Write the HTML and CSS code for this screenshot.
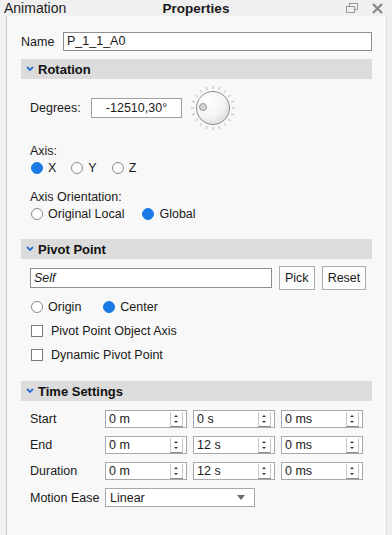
FILE: index.html
```html
<!DOCTYPE html>
<html lang="en">
<head>
    <meta charset="UTF-8">
    <title>Properties</title>
    <link rel="stylesheet" href="styles.css">
</head>
<body>
    <div class="titlebar">
        <span class="tab">Animation</span>
        <span class="title">Properties</span>
        <div class="win-icons">
            <svg width="12" height="10" viewBox="0 0 12 10">
                <rect x="3.5" y="0.5" width="8" height="6" fill="none" stroke="#9a9a9a"/>
                <rect x="0.5" y="3.5" width="8" height="6" fill="#f0f0f0" stroke="#9a9a9a"/>
            </svg>
            <svg width="11" height="11" viewBox="0 0 11 11">
                <path d="M1 1 L10 10 M10 1 L1 10" stroke="#8a8a8a" stroke-width="2.4"/>
            </svg>
        </div>
    </div>

    <div class="panel">
        <div class="row name-row">
            <label class="lbl name-lbl">Name</label>
            <div class="field name-field">P_1_1_A0</div>
        </div>

        <div class="section-head">
            <svg class="chev" width="8" height="6" viewBox="0 0 8 6"><path d="M1 1 L4 4 L7 1" fill="none" stroke="#2b6fd0" stroke-width="1.8"/></svg>
            Rotation
        </div>

        <div class="row degrees-row">
            <label class="lbl">Degrees:</label>
            <div class="field deg-field">-12510,30°</div>
            <svg class="dial" width="46" height="46" viewBox="0 0 46 46">
                <defs>
                    <radialGradient id="knob" cx="0.35" cy="0.3" r="0.8">
                        <stop offset="0" stop-color="#ffffff"/>
                        <stop offset="0.6" stop-color="#f4f4f4"/>
                        <stop offset="1" stop-color="#d8d8d8"/>
                    </radialGradient>
                </defs>
                <g id="ticks" stroke="#b4b4b4" stroke-width="1"></g>
                <circle cx="23" cy="23" r="16.5" fill="url(#knob)" stroke="#8c8c8c"/>
                <circle cx="13" cy="22" r="3.5" fill="#d4d4d4" stroke="#9a9a9a"/>
            </svg>
        </div>

        <div class="caption axis-cap">Axis:</div>
        <div class="radios">
            <span class="opt"><i class="radio on"></i>X</span>
            <span class="opt"><i class="radio"></i>Y</span>
            <span class="opt"><i class="radio"></i>Z</span>
        </div>

        <div class="caption orient-cap">Axis Orientation:</div>
        <div class="radios">
            <span class="opt wide"><i class="radio"></i>Original Local</span>
            <span class="opt"><i class="radio on"></i>Global</span>
        </div>

        <div class="section-head pivot-head">
            <svg class="chev" width="8" height="6" viewBox="0 0 8 6"><path d="M1 1 L4 4 L7 1" fill="none" stroke="#2b6fd0" stroke-width="1.8"/></svg>
            Pivot Point
        </div>

        <div class="row self-row">
            <div class="field self-field">Self</div>
            <button class="btn pick">Pick</button>
            <button class="btn reset">Reset</button>
        </div>

        <div class="radios pivot-radios">
            <span class="opt origin"><i class="radio"></i>Origin</span>
            <span class="opt"><i class="radio on"></i>Center</span>
        </div>
        <div class="check"><i class="box"></i>Pivot Point Object Axis</div>
        <div class="check"><i class="box"></i>Dynamic Pivot Point</div>

        <div class="section-head time-head">
            <svg class="chev" width="8" height="6" viewBox="0 0 8 6"><path d="M1 1 L4 4 L7 1" fill="none" stroke="#2b6fd0" stroke-width="1.8"/></svg>
            Time Settings
        </div>

        <div class="time-grid">
            <label class="lbl">Start</label>
            <div class="spin"><span>0 m</span><i class="arrows"></i></div>
            <div class="spin"><span>0 s</span><i class="arrows"></i></div>
            <div class="spin"><span>0 ms</span><i class="arrows"></i></div>

            <label class="lbl">End</label>
            <div class="spin"><span>0 m</span><i class="arrows"></i></div>
            <div class="spin"><span>12 s</span><i class="arrows"></i></div>
            <div class="spin"><span>0 ms</span><i class="arrows"></i></div>

            <label class="lbl">Duration</label>
            <div class="spin"><span>0 m</span><i class="arrows"></i></div>
            <div class="spin"><span>12 s</span><i class="arrows"></i></div>
            <div class="spin"><span>0 ms</span><i class="arrows"></i></div>

            <label class="lbl">Motion Ease</label>
            <div class="select"><span>Linear</span><svg width="8" height="5" viewBox="0 0 8 5"><path d="M0 0 L8 0 L4 5 Z" fill="#6a6a6a"/></svg></div>
        </div>
    </div>

    <script>
        // dial tick marks
        const ticks = document.getElementById('ticks');
        for (let a = 0; a < 360; a += 18) {
            const r = a * Math.PI / 180;
            const x1 = 23 + Math.cos(r) * 19, y1 = 23 + Math.sin(r) * 19;
            const x2 = 23 + Math.cos(r) * 22, y2 = 23 + Math.sin(r) * 22;
            const l = document.createElementNS('http://www.w3.org/2000/svg', 'line');
            l.setAttribute('x1', x1); l.setAttribute('y1', y1);
            l.setAttribute('x2', x2); l.setAttribute('y2', y2);
            ticks.appendChild(l);
        }
    </script>
</body>
</html>
```

FILE: styles.css
```css
html, body {
    margin: 0;
    padding: 0;
    height: 535px;
    overflow: hidden;
}

body {
    background-color: #f0f0f0;
    font-family: "Liberation Sans", Arial, sans-serif;
    font-size: 12.5px;
    color: #1a1a1a;
}

.titlebar {
    height: 16px;
    display: flex;
    align-items: center;
    position: relative;
    padding-left: 4px;
}

.titlebar .tab {
    font-size: 14px;
    color: #222;
}

.titlebar .title {
    position: absolute;
    left: 0;
    right: 0;
    text-align: center;
    font-weight: bold;
    font-size: 13.5px;
    color: #1a1a1a;
    pointer-events: none;
}

.win-icons {
    margin-left: auto;
    margin-right: 9px;
    display: flex;
    gap: 14px;
    align-items: center;
}

.panel {
    margin-left: 6px;
    width: 381px;
    height: 519px;
    box-sizing: border-box;
    background-color: #f8f8f8;
    border-left: 1px solid #c8c8c8;
    border-right: 1px solid #e0e0e0;
    padding: 16px 14px 0 14px;
}

.row {
    display: flex;
    align-items: center;
}

.lbl {
    color: #1a1a1a;
    white-space: nowrap;
}

.field {
    background: #fff;
    border: 1px solid #8e8e8e;
    height: 17px;
    line-height: 17px;
    padding: 0 3px;
    box-sizing: content-box;
}

.name-lbl {
    width: 42px;
}

.name-field {
    flex: 1;
}

.section-head {
    margin-top: 8px;
    height: 20px;
    background-color: #dcdcdc;
    display: flex;
    align-items: center;
    font-weight: bold;
    font-size: 13px;
    color: #111;
    padding-left: 5px;
}

.chev {
    margin-right: 4px;
}

.degrees-row {
    margin-top: 7px;
    padding-left: 9px;
    height: 44px;
}

.degrees-row .lbl {
    width: 61px;
}

.deg-field {
    width: 83px;
    text-align: center;
    border-color: #a0a0a0;
    height: 18px;
    line-height: 18px;
}

.dial {
    margin-left: 8px;
}

.caption {
    padding-left: 9px;
    height: 14px;
    line-height: 14px;
}

.axis-cap {
    margin-top: 14px;
}

.orient-cap {
    margin-top: 15px;
}

.radios {
    display: flex;
    padding-left: 10px;
    margin-top: 3px;
    height: 14px;
    align-items: center;
}

.opt {
    display: flex;
    align-items: center;
    margin-right: 15px;
}

.opt.wide {
    margin-right: 18px;
}

.radio {
    display: inline-block;
    width: 10px;
    height: 10px;
    border-radius: 50%;
    border: 1px solid #8a8a8a;
    background: #fff;
    margin-right: 5px;
}

.radio.on {
    background: #1a7ae6;
    border-color: #1a7ae6;
}

.pivot-head {
    margin-top: 18px;
}

.self-row {
    margin-top: 7px;
    padding-left: 9px;
    height: 24px;
}

.self-field {
    width: 234px;
    font-style: italic;
    height: 18px;
    line-height: 18px;
}

.btn {
    font-family: inherit;
    font-size: 12.5px;
    color: #1a1a1a;
    background: #fcfcfc;
    border: 1px solid #acacac;
    height: 24px;
    padding: 0 5px;
    margin-left: 7px;
}

.pivot-radios {
    margin-top: 10px;
}

.opt.origin {
    margin-right: 22px;
}

.check {
    display: flex;
    align-items: center;
    padding-left: 10px;
    margin-top: 10px;
    height: 14px;
}

.box {
    display: inline-block;
    width: 10px;
    height: 10px;
    border: 1px solid #7a7a7a;
    background: #fff;
    margin-right: 8px;
}

.time-head {
    margin-top: 19px;
}

.time-grid {
    margin-top: 9px;
    padding-left: 9px;
    display: grid;
    grid-template-columns: 69px 82px 82px 82px;
    column-gap: 6px;
    row-gap: 8px;
    align-items: center;
}

.spin {
    height: 18px;
    background: #fff;
    border: 1px solid #a8a8a8;
    box-sizing: border-box;
    display: flex;
    align-items: center;
    padding-left: 3px;
}

.spin span {
    flex: 1;
}

.arrows {
    width: 11px;
    height: 14px;
    margin-right: 3px;
    border-left: 1px solid #c8c8c8;
    border-right: 1px solid #c8c8c8;
    border-bottom: 1px solid #8a8a8a;
    background: #fff;
    position: relative;
}

.arrows::before,
.arrows::after {
    content: "";
    position: absolute;
    left: 3px;
    border-left: 2.5px solid transparent;
    border-right: 2.5px solid transparent;
}

.arrows::before {
    top: 3px;
    border-bottom: 2.5px solid #333;
}

.arrows::after {
    bottom: 3px;
    border-top: 2.5px solid #333;
}

.select {
    grid-column: span 2;
    width: 150px;
    height: 19px;
    background: #fff;
    border: 1px solid #a8a8a8;
    box-sizing: border-box;
    display: flex;
    align-items: center;
    padding: 0 9px 0 4px;
}

.select span {
    flex: 1;
}
```
